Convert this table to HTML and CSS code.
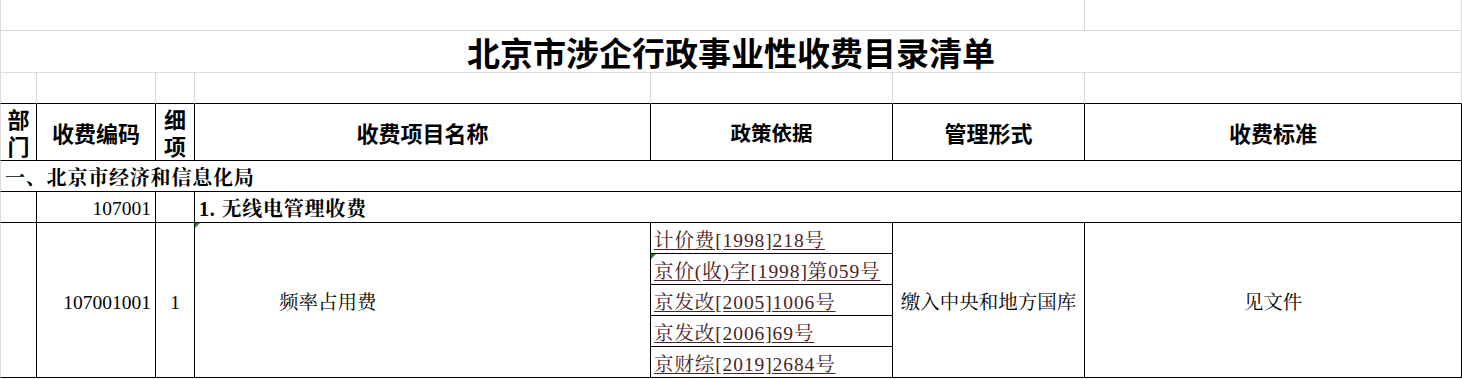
FILE: index.html
```html
<!DOCTYPE html>
<html lang="zh-CN">
<head>
<meta charset="utf-8">
<title>北京市涉企行政事业性收费目录清单</title>
<link rel="stylesheet" href="styles.css">
</head>
<body>
<table class="sheet">
  <colgroup>
    <col class="c-dept"><col class="c-code"><col class="c-item"><col class="c-name"><col class="c-policy"><col class="c-mgmt"><col class="c-std">
  </colgroup>
  <tr class="r31">
    <td class="g first" colspan="6"></td>
    <td class="g"></td>
  </tr>
  <tr class="r42">
    <td class="g first title" colspan="7">北京市涉企行政事业性收费目录清单</td>
  </tr>
  <tr class="r31">
    <td class="g gb first"></td><td class="g gb"></td><td class="g gb"></td><td class="g gb"></td><td class="g gb"></td><td class="g gb"></td><td class="g gb"></td>
  </tr>
  <tr class="r57">
    <th class="first">部门</th>
    <th>收费编码</th>
    <th>细项</th>
    <th>收费项目名称</th>
    <th class="small">政策依据</th>
    <th>管理形式</th>
    <th>收费标准</th>
  </tr>
  <tr class="r31">
    <td class="first section" colspan="7">一、北京市经济和信息化局</td>
  </tr>
  <tr class="r31">
    <td class="first"></td>
    <td class="num">107001</td>
    <td></td>
    <td class="group" colspan="4">1. 无线电管理收费</td>
  </tr>
  <tr class="r31">
    <td class="first" rowspan="5"></td>
    <td class="num mid" rowspan="5">107001001</td>
    <td class="center" rowspan="5">1</td>
    <td class="name marked" rowspan="5">频率占用费<span class="flag"></span></td>
    <td class="policy"><a class="doc">计价费[1998]218号</a></td>
    <td class="center" rowspan="5">缴入中央和地方国库</td>
    <td class="center" rowspan="5">见文件</td>
  </tr>
  <tr class="r31">
    <td class="policy marked"><a class="doc">京价(收)字[1998]第059号</a><span class="flag"></span></td>
  </tr>
  <tr class="r31">
    <td class="policy"><a class="doc">京发改[2005]1006号</a></td>
  </tr>
  <tr class="r31">
    <td class="policy"><a class="doc">京发改[2006]69号</a></td>
  </tr>
  <tr class="r31">
    <td class="policy"><a class="doc">京财综[2019]2684号</a></td>
  </tr>
</table>
</body>
</html>
```
FILE: styles.css
```css
html, body {
  margin: 0;
  padding: 0;
  background: #ffffff;
}

.sheet {
  border-collapse: separate;
  border-spacing: 0;
  table-layout: fixed;
  width: 1462px;
  font-family: "Liberation Serif", "Noto Serif CJK SC", "Noto Sans CJK SC", serif;
  font-size: 19.5px;
  color: #000000;
}

.c-dept { width: 37px; }
.c-code { width: 119px; }
.c-item { width: 39px; }
.c-name { width: 456px; }
.c-policy { width: 242px; }
.c-mgmt { width: 192px; }
.c-std { width: 377px; }

.r31 { height: 31px; }
.r42 { height: 42px; }
.r57 { height: 57px; }

.sheet td,
.sheet th {
  box-sizing: border-box;
  padding: 0 3px;
  border-right: 1px solid #000000;
  border-bottom: 1px solid #000000;
  line-height: 22px;
  white-space: nowrap;
  vertical-align: bottom;
}

.sheet .first {
  border-left: 1px solid #dadada;
}

.sheet .g {
  border-right-color: #dadada;
  border-bottom-color: #dadada;
}

.sheet .gb {
  border-bottom-color: #000000;
}

.sheet .title {
  font-family: "Noto Sans CJK SC", "Liberation Sans", sans-serif;
  font-weight: 700;
  font-size: 33px;
  text-align: center;
  vertical-align: middle;
  line-height: 40px;
}

.sheet th {
  font-family: "Noto Sans CJK SC", "Liberation Sans", sans-serif;
  font-weight: 700;
  font-size: 22px;
  line-height: 27px;
  text-align: center;
  vertical-align: middle;
  white-space: normal;
}

.sheet th.small {
  font-size: 20.5px;
}

.sheet .section,
.sheet .group {
  font-weight: 700;
  font-size: 20px;
  letter-spacing: 0.8px;
  padding-left: 4px;
  padding-bottom: 2px;
}

.sheet .num {
  text-align: right;
  padding-right: 4px;
  padding-bottom: 2px;
}

.sheet .mid,
.sheet .center,
.sheet .name {
  vertical-align: middle;
  padding-top: 5px;
  padding-bottom: 0;
}

.sheet .center {
  text-align: center;
}

.sheet .name {
  padding-left: 84px;
}

.marked {
  position: relative;
}

.flag {
  position: absolute;
  top: 0;
  left: 0;
  width: 0;
  height: 0;
  border-top: 5px solid #1e8c1e;
  border-right: 5px solid transparent;
}

.sheet .policy {
  padding-left: 3px;
  line-height: 24px;
  letter-spacing: 0.9px;
}

.doc {
  color: #4a2323;
  text-decoration: underline;
  text-underline-offset: 2px;
}
```
